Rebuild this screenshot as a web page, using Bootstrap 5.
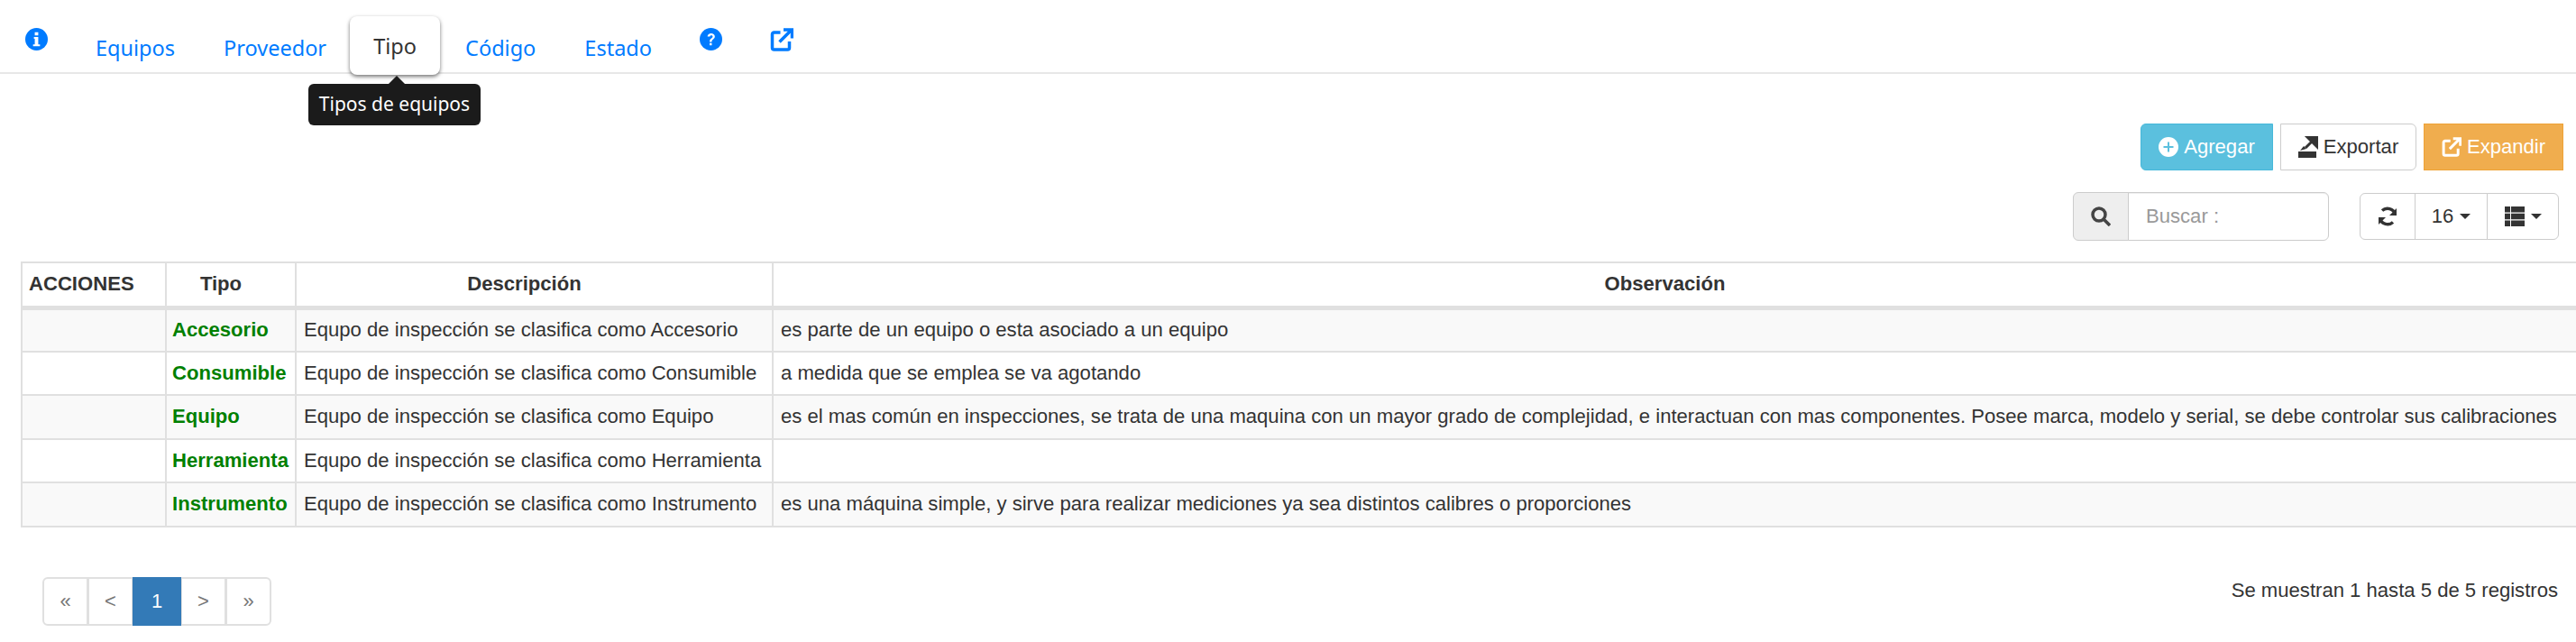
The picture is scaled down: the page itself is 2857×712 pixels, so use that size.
<!DOCTYPE html>
<html lang="es"><head><meta charset="utf-8"><title>Tipo</title>
<link rel="stylesheet" href="https://cdn.jsdelivr.net/npm/bootstrap@5.3.0/dist/css/bootstrap.min.css">
<style>
html,body{background:#fff}
body{font-family:"Liberation Sans",Arial,sans-serif;font-size:22.1px;color:#333;height:712px;overflow:hidden}
.topnav{height:82px;border-bottom:2px solid #e7e7e7;padding-left:28px;font-family:"Noto Sans",sans-serif;font-size:23.5px;position:relative;flex-wrap:nowrap}
.topnav .nav-link{color:#007bff;padding:0;line-height:32px}
.ticon{display:block;margin-top:31px;line-height:0}
.tabx{margin-top:37px}
.m53{margin-left:53px}.m54{margin-left:54px}.m26{margin-left:26px}.m28{margin-left:28px}
.topnav .tabon{height:65px;width:100px;margin-top:18px;border-radius:8px;box-shadow:0 2px 4px rgba(0,0,0,.55);color:#333;display:flex;align-items:center;justify-content:center;background:#fff;position:relative;z-index:1}
.tip{position:absolute;left:342px;top:93px;width:191px;height:46px;background:#1b1b1b;color:#fff;border-radius:6px;font-size:21px;display:flex;align-items:center;justify-content:center;z-index:2}
.tip:before{content:"";position:absolute;top:-9px;left:89px;border:9px solid transparent;border-top:0;border-bottom-color:#1b1b1b}
.btnrow{padding:55px 14px 0 0;gap:8px}
.bx{height:52px;font-size:22.1px;padding:0;display:flex;align-items:center;justify-content:center;gap:6px}
.bx1{width:147px;background:#5bc0de;color:#fff;border-color:#46b8da;border-radius:6px 0 0 6px}
.bx2{width:151px;background:#fff;color:#333;border-color:#ccc;border-radius:0 6px 6px 0}
.bx3{width:155px;background:#f0ad4e;color:#fff;border-color:#eea236;border-radius:0}
.toolrow{padding:24px 19px 0 0;gap:32px;align-items:center}
.srch{width:284px;height:54px;flex-wrap:nowrap;margin-right:2px}
.srch .input-group-text{width:62px;background:#eee;border-color:#ccc;justify-content:center;padding:0;border-radius:6px 0 0 6px}
.srch .form-control{font-size:22.1px;padding-left:19px;border-color:#ccc;border-radius:0 6px 6px 0;box-shadow:inset 0 1px 1px rgba(0,0,0,.075)}
.srch .form-control::placeholder{color:#999}
.tgrp{height:52px}
.tgrp .btn{font-size:22.1px;color:#333;border-color:#ccc;background:#fff;padding:0;display:flex;align-items:center;justify-content:center;gap:7px;border-radius:6px}
.w62{width:62px}.w81{width:81px}.w80{width:80px}
.caretx{width:0;height:0;border:6px solid transparent;border-top:6px solid #333;border-bottom:0}
.tblx{width:2834px;margin:23px 0 0 23px;table-layout:fixed;color:#333;--bs-table-border-color:#e0e0e0;--bs-table-color:#333}
.c1{width:160px}.c2{width:144px}.c3{width:529px}
.tblx>thead>tr>th,.tblx>tbody>tr>td{padding:0 8px;white-space:nowrap;height:48.5px;line-height:30px;vertical-align:middle;font-size:22.1px;border:solid #e0e0e0;border-width:2px 1px 2px 2px}
.tblx>thead>tr>th{text-align:center;height:50px;border-bottom-width:5px;padding-right:30px}
.tblx>thead>tr>th:first-child{text-align:left;padding:0 0 0 7px}
.tblx>tbody>tr.shade>td{background:#f9f9f9}
.tblx>tbody>tr>td.tp{color:#008000;font-weight:700;padding-left:6px}
.tblx>tbody>tr>td:last-child,.tblx>thead>tr>th:last-child{border-right:0}
.footx{padding:55px 20px 0 48px;align-items:flex-start}
.pagination{margin:0;--bs-pagination-font-size:22px;--bs-pagination-color:#777;--bs-pagination-border-color:#e0e0e0;--bs-pagination-border-width:2px;--bs-pagination-active-bg:#337ab7;--bs-pagination-active-border-color:#337ab7;--bs-pagination-border-radius:6px}
.pagination .page-link{height:54px;width:51px;padding:0;display:flex;align-items:center;justify-content:center;margin-left:-1px}
.pagination .page-item:nth-child(3) .page-link{width:54px}
.inf{font-size:22.1px;color:#333;line-height:30px}
</style></head><body>
<nav class="topnav nav d-flex align-items-start">
<a href="#" class="ticon" aria-label="info"><svg width="25" height="25" viewBox="0 0 26 26"><circle cx="13" cy="13" r="13" fill="#007bff"/><path d="M10 10.500h5v8.500h2v2H9v-2h2v-6.500h-1zM11 5h4v3.500h-4z" fill="#fff"/></svg></a>
<a href="#" class="nav-link tabx m53">Equipos</a>
<a href="#" class="nav-link tabx m54">Proveedor</a>
<a href="#" class="nav-link tabon m26">Tipo</a>
<a href="#" class="nav-link tabx m28">Código</a>
<a href="#" class="nav-link tabx m54">Estado</a>
<a href="#" class="ticon m53" aria-label="ayuda"><svg width="25" height="25" viewBox="0 0 26 26"><circle cx="13" cy="13" r="13" fill="#007bff"/><path d="M9 10c0-5 8.500-5 8.500 0 0 3-3.500 3-3.500 6h-2.500c0-4 3.500-4 3.500-6 0-2-3-2-3.200 0zM11.500 17.500H14V20h-2.500z" fill="#fff"/></svg></a>
<a href="#" class="ticon m53" aria-label="abrir"><svg width="26" height="26" viewBox="0 0 26 26" fill="none" stroke="#007bff" stroke-width="3.500"><path d="M21.500 15v7a2 2 0 0 1-2 2h-15a2 2 0 0 1-2-2V7a2 2 0 0 1 2-2h7"/><path d="M10.500 15.500L23 3M15 2h9.500v9.500"/></svg></a>
<div class="tip">Tipos de equipos</div>
</nav>
<div class="d-flex justify-content-end btnrow">
<a href="#" class="btn bx bx1"><svg width="22" height="22" viewBox="0 0 22 22"><circle cx="11" cy="11" r="11" fill="#fff"/><path d="M11 5.500v11M5.500 11h11" stroke="#5bc0de" stroke-width="2"/></svg>Agregar</a>
<a href="#" class="btn bx bx2"><svg width="22" height="24" viewBox="0 0 22 24"><path d="M0 17h20v7H0z" fill="#333"/><path d="M10 1h11v11zM15 6l-7 7" fill="#333" stroke="#333" stroke-width="3"/><path d="M2 16l4-5 3 3z" fill="#333"/></svg>Exportar</a>
<a href="#" class="btn bx bx3"><svg width="22" height="24" viewBox="0 0 26 26" fill="none" stroke="#fff" stroke-width="3.500"><path d="M21.500 15v7a2 2 0 0 1-2 2h-15a2 2 0 0 1-2-2V7a2 2 0 0 1 2-2h7"/><path d="M10.500 15.500L23 3M15 2h9.500v9.500"/></svg>Expandir</a>
</div>
<div class="d-flex justify-content-end toolrow">
<div class="input-group srch"><span class="input-group-text"><svg width="22" height="22" viewBox="0 0 22 22" fill="none" stroke="#444" stroke-width="3.500"><circle cx="9" cy="9" r="7"/><path d="M14 14l7 7"/></svg></span><input class="form-control" placeholder="Buscar :"></div>
<div class="btn-group tgrp"><a href="#" class="btn w62"><svg width="22" height="24" viewBox="0 0 22 24" fill="none" stroke="#333" stroke-width="3.500"><path d="M19.500 9.500A9 9 0 0 0 5 5.500"/><path d="M2.500 14.500A9 9 0 0 0 17 18.500"/><path d="M21 3v8h-8z" fill="#333" stroke="none"/><path d="M1 21v-8h8z" fill="#333" stroke="none"/></svg></a><a href="#" class="btn w81">16<i class="caretx"></i></a><a href="#" class="btn w80"><svg width="22" height="22" viewBox="0 0 22 22" fill="#333"><path d="M0 0h6v6.500H0zM7 0h15v6.500H7zM0 7.700h6v6.500H0zM7 7.700h15v6.500H7zM0 15.500h6V22H0zM7 15.500h15V22H7z"/></svg><i class="caretx"></i></a></div>
</div>
<table class="table tblx mb-0"><colgroup><col class="c1"><col class="c2"><col class="c3"><col></colgroup>
<thead><tr><th>ACCIONES</th><th>Tipo</th><th>Descripción</th><th>Observación</th></tr></thead><tbody>
<tr class="shade"><td></td><td class="tp">Accesorio</td><td>Equpo de inspección se clasifica como Accesorio</td><td>es parte de un equipo o esta asociado a un equipo</td></tr>
<tr><td></td><td class="tp">Consumible</td><td>Equpo de inspección se clasifica como Consumible</td><td>a medida que se emplea se va agotando</td></tr>
<tr class="shade"><td></td><td class="tp">Equipo</td><td>Equpo de inspección se clasifica como Equipo</td><td>es el mas común en inspecciones, se trata de una maquina con un mayor grado de complejidad, e interactuan con mas componentes. Posee marca, modelo y serial, se debe controlar sus calibraciones</td></tr>
<tr><td></td><td class="tp">Herramienta</td><td>Equpo de inspección se clasifica como Herramienta</td><td></td></tr>
<tr class="shade"><td></td><td class="tp">Instrumento</td><td>Equpo de inspección se clasifica como Instrumento</td><td>es una máquina simple, y sirve para realizar mediciones ya sea distintos calibres o proporciones</td></tr>
</tbody></table>
<div class="d-flex justify-content-between footx">
<ul class="pagination"><li class="page-item"><a class="page-link" href="#">«</a></li><li class="page-item"><a class="page-link" href="#">&lt;</a></li><li class="page-item active"><a class="page-link" href="#">1</a></li><li class="page-item"><a class="page-link" href="#">&gt;</a></li><li class="page-item"><a class="page-link" href="#">»</a></li></ul>
<div class="inf">Se muestran 1 hasta 5 de 5 registros</div>
</div>
<script src="https://cdn.jsdelivr.net/npm/bootstrap@5.3.0/dist/js/bootstrap.bundle.min.js"></script>
</body></html>
